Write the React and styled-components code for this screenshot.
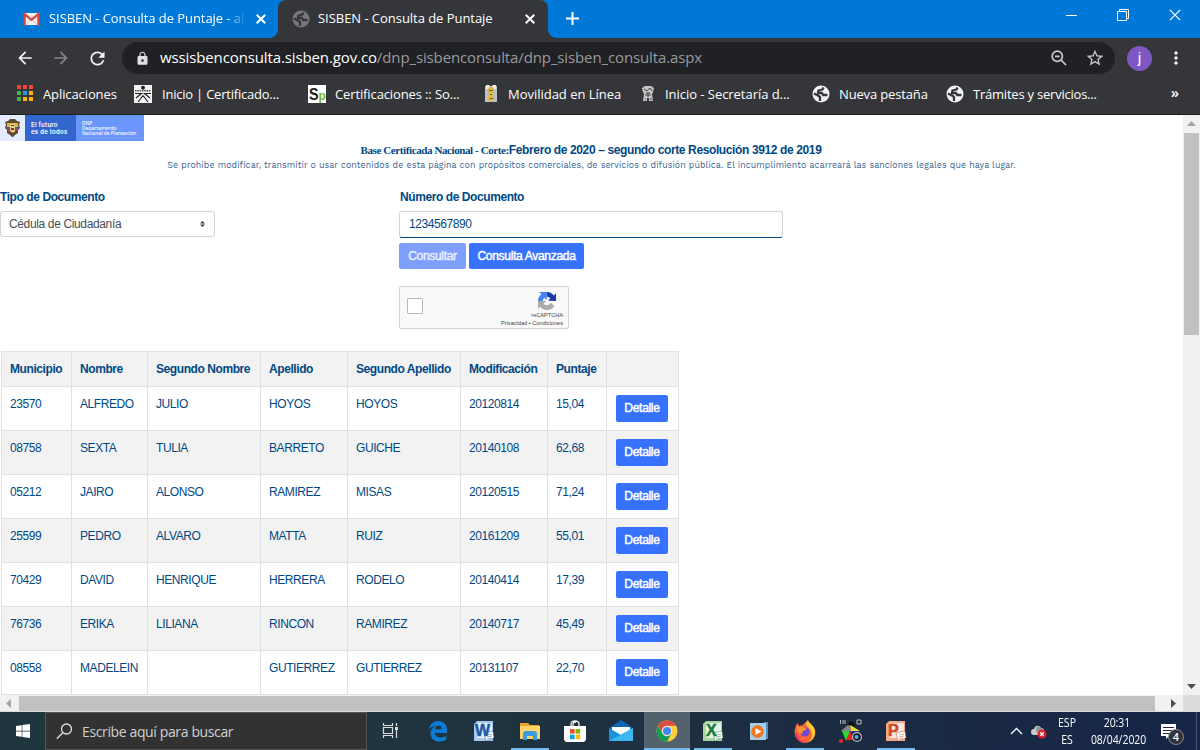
import React from 'react';
import styled, {createGlobalStyle} from 'styled-components';
import {MdArrowBack, MdArrowForward, MdRefresh, MdLock, MdStarBorder, MdMoreVert} from 'react-icons/md';
import {FaWindows} from 'react-icons/fa';

// Data
const bookmarks = [
    {icon: 'apps', text: 'Aplicaciones', left: 16, gap: 10, width: 118, spacing: -.1},
    {icon: 'sena', text: 'Inicio | Certificado...', left: 0, gap: 10, width: 174, spacing: -.22},
    {icon: 'sp', text: 'Certificaciones :: So...', left: 0, gap: 9, width: 176, spacing: -.12},
    {icon: 'movilidad', text: 'Movilidad en Línea', left: 0, gap: 10, width: 157, spacing: -.02},
    {icon: 'secretaria', text: 'Inicio - Secretaría d...', left: 0, gap: 10, width: 171, spacing: -.04},
    {icon: 'globe', text: 'Nueva pestaña', left: 0, gap: 9, width: 134, spacing: -.15},
    {icon: 'globe', text: 'Trámites y servicios...', left: 0, gap: 9, width: 170, spacing: -.22},
];
const columns = [
    {title: 'Municipio', width: 70},
    {title: 'Nombre', width: 76},
    {title: 'Segundo Nombre', width: 113},
    {title: 'Apellido', width: 87},
    {title: 'Segundo Apellido', width: 113},
    {title: 'Modificación', width: 87},
    {title: 'Puntaje', width: 59},
    {title: '', width: 72},
];
const people = [
    ['23570', 'ALFREDO', 'JULIO', 'HOYOS', 'HOYOS', '20120814', '15,04'],
    ['08758', 'SEXTA', 'TULIA', 'BARRETO', 'GUICHE', '20140108', '62,68'],
    ['05212', 'JAIRO', 'ALONSO', 'RAMIREZ', 'MISAS', '20120515', '71,24'],
    ['25599', 'PEDRO', 'ALVARO', 'MATTA', 'RUIZ', '20161209', '55,01'],
    ['70429', 'DAVID', 'HENRIQUE', 'HERRERA', 'RODELO', '20140414', '17,39'],
    ['76736', 'ERIKA', 'LILIANA', 'RINCON', 'RAMIREZ', '20140717', '45,49'],
    ['08558', 'MADELEIN', '', 'GUTIERREZ', 'GUTIERREZ', '20131107', '22,70'],
];

// Styles
const GlobalStyle = createGlobalStyle`
    * {
        box-sizing: border-box;
    }

    body {
        margin: 0;
        overflow: hidden;
    }

    svg {
        display: block;
        flex: none;
    }
`;

const Screen = styled.div`
    display: flex;
    flex-direction: column;
    width: 1200px;
    height: 750px;
    overflow: hidden;
    background: #fff;
    font-family: 'Open Sans', 'Noto Sans', sans-serif;
`;

// Browser
const TabStrip = styled.header`
    display: flex;
    flex: none;
    height: 38px;
    background: #0078d7;
    color: #fff;
`;
const Tab = styled.div`
    position: relative;
    display: flex;
    align-items: center;
    width: ${p => p.$width}px;
    padding: 0 ${p => p.$right}px 1px ${p => p.$left}px;
    border-radius: 8px 8px 0 0;
    background: ${p => p.$active ? '#35363a' : 'transparent'};

    &::before,
    &::after {
        content: '';
        position: absolute;
        bottom: 0;
        width: 8px;
        height: 8px;
        display: ${p => p.$active ? 'block' : 'none'};
    }

    &::before {
        left: -8px;
        background: radial-gradient(circle at 0 0, transparent 7.5px, #35363a 8px);
    }

    &::after {
        right: -8px;
        background: radial-gradient(circle at 100% 0, transparent 7.5px, #35363a 8px);
    }
`;
const TabTitle = styled.span`
    flex: 1;
    margin: 0 0 2px ${p => p.$gap}px;
    overflow: hidden;
    font-size: 13px;
    letter-spacing: ${p => p.$spacing}px;
    line-height: 20px;
    white-space: nowrap;
    ${p => p.$fade && 'mask-image: linear-gradient(90deg, #000 178px, transparent 197px);'}
`;
const NewTab = styled.div`
    display: flex;
    align-items: center;
    padding: 0 0 1px 18px;
`;
const WindowControls = styled.div`
    display: flex;
    gap: 40px;
    align-items: center;
    margin-left: auto;
    padding: 0 19px 8px 0;
`;
const Toolbar = styled.div`
    display: flex;
    flex: none;
    align-items: center;
    height: 40px;
    padding-left: 15px;
    background: #35363a;
    color: #f1f3f4;
`;
const NavButton = styled.span`
    width: 36px;
    color: ${p => p.$disabled ? '#85868a' : '#f1f3f4'};
`;
const Omnibox = styled.div`
    display: flex;
    align-items: center;
    width: 993px;
    height: 32px;
    margin-left: -1px;
    padding: 0 10px 0 13px;
    border-radius: 16px;
    background: #202124;
`;
const Url = styled.span`
    flex: 1;
    margin: 0 0 2px 10px;
    color: #999a9d;
    font-size: 15px;
    letter-spacing: -.12px;
    white-space: nowrap;

    > b {
        color: #fff;
        font-weight: 400;
    }
`;
const OmniActions = styled.span`
    display: flex;
    gap: 18px;
    align-items: center;
    color: #c8c9cc;
`;
const Avatar = styled.span`
    width: 25px;
    height: 25px;
    margin: 0 14px 0 12px;
    border-radius: 50%;
    background: #7e57c2;
    color: #fff;
    font-family: Roboto, sans-serif;
    font-size: 15px;
    line-height: 24px;
    text-align: center;
`;
const BookmarkBar = styled.nav`
    display: flex;
    flex: none;
    align-items: center;
    height: 37px;
    padding-bottom: 5px;
    border-bottom: 1px solid #1d1e20;
    background: #35363a;
    color: #fff;
`;
const Bookmark = styled.a`
    display: flex;
    gap: ${p => p.$gap}px;
    align-items: center;
    width: ${p => p.$width}px;
    margin-left: ${p => p.$left}px;
    font-size: 13px;
    letter-spacing: ${p => p.$spacing}px;
    white-space: nowrap;
`;
const More = styled.span`
    margin: 0 21px 3px auto;
    font-size: 15px;
    font-weight: 600;
`;

// Page
const Viewport = styled.div`
    display: grid;
    flex: none;
    grid-template-columns: 1183px 17px;
    grid-template-rows: 580px 17px;
    height: 597px;
`;
const Page = styled.main`
    overflow: hidden;
    color: #004884;
    font-family: 'Liberation Sans', Arial, sans-serif;
    font-size: 12px;
    letter-spacing: -.42px;
`;
const Banner = styled.div`
    display: flex;
    height: 26px;
    color: #fff;
    font-family: 'Noto Sans', sans-serif;
    letter-spacing: 0;
`;
const Emblem = styled.div`
    width: 25px;
    padding: 3px 0 0 4px;
    background: #e5ecfd;
`;
const Slogan = styled.div`
    width: 51px;
    padding: 7px 0 0 6px;
    background: #3366cc;
    font-family: Inter, sans-serif;
    font-size: 6.1px;
    font-weight: 600;
    letter-spacing: .22px;
    line-height: 6.8px;
    white-space: nowrap;
`;
const Agency = styled.div`
    width: 68px;
    padding: 6px 0 0 6px;
    background: #6b96fb;
    font-size: 4.9px;
    font-weight: 500;
    line-height: 5.2px;
    white-space: nowrap;
`;
const Title = styled.h1`
    margin: 2px 0 0;
    padding-right: 1px;
    font-size: 12px;
    font-weight: 700;
    letter-spacing: -.38px;
    line-height: 15px;
    text-align: center;

    > span {
        font-family: 'Liberation Serif', serif;
        font-size: 11px;
        letter-spacing: -.4px;
    }
`;
const Notice = styled.p`
    margin: 1px 0;
    color: #3a648f;
    font-family: 'Work Sans', Inter, sans-serif;
    font-size: 8.8px;
    letter-spacing: .1px;
    line-height: 13px;
    text-align: center;
    white-space: nowrap;
`;
const Form = styled.div`
    display: grid;
    grid-template-columns: 399px 384px;
    height: 161px;
    margin-top: 18px;
`;
const FieldLabel = styled.label`
    display: block;
    height: 21px;
    padding-left: ${p => p.$indent || 0}px;
    font-weight: 700;
    line-height: 14px;
`;
const Select = styled.div`
    display: flex;
    align-items: center;
    justify-content: space-between;
    width: 215px;
    height: 26px;
    padding: 0 9px 0 8px;
    border: 1px solid #ced4da;
    border-radius: 3px;
    color: #495057;
    letter-spacing: -.36px;
`;
const Field = styled.div`
    width: 384px;
    height: 27px;
    padding-left: 9px;
    border: 1px solid #ced4da;
    border-bottom: 1px solid #004884;
    border-radius: 3px;
    line-height: 25px;
`;
const Buttons = styled.div`
    display: flex;
    gap: 3px;
    margin-top: 5px;
`;
const Button = styled.button`
    display: block;
    width: ${p => p.$width}px;
    height: ${p => p.$height || 26}px;
    margin-left: ${p => p.$indent || 0}px;
    padding: 0 0 1px;
    border: 0;
    border-radius: 2px;
    background: ${p => p.disabled ? '#7f9fff' : '#3772ff'};
    color: ${p => p.disabled ? '#e9eeff' : '#fff'};
    font-family: inherit;
    font-size: 12px;
    letter-spacing: -.3px;
    -webkit-text-stroke: .45px currentColor;
`;
const Captcha = styled.div`
    display: flex;
    justify-content: space-between;
    width: 170px;
    height: 43px;
    margin-top: 17px;
    padding: 11px 5px 0 7px;
    border: 1px solid #d3d3d3;
    border-radius: 2px;
    background: #f9f9f9;
`;
const CheckBox = styled.span`
    width: 16px;
    height: 16px;
    border: 1px solid #b9b9b9;
    border-radius: 1px;
    background: #fff;
`;
const CaptchaBrand = styled.div`
    display: flex;
    flex-direction: column;
    align-items: flex-end;
    margin-top: -6px;
    color: #444;
    font-size: 5.6px;
    letter-spacing: 0;
    line-height: 7.5px;

    > svg {
        margin: 0 7px 2px 0;
    }
`;
const Table = styled.table`
    width: 677px;
    margin-left: 1px;
    border-collapse: collapse;
    table-layout: fixed;
    line-height: 18px;

    th,
    td {
        padding: 8px 8px 0;
        border: 1px solid #dee2e6;
        text-align: left;
        vertical-align: top;
        white-space: nowrap;
    }
`;
const HeadRow = styled.tr`
    height: 35px;
    background: #f2f2f2;
`;
const Row = styled.tr`
    height: 44px;
    background: ${p => p.$striped ? '#f2f2f2' : '#fff'};
`;

// Scrollbars
const VerticalBar = styled.div`
    display: flex;
    flex-direction: column;
    align-items: center;
    justify-content: space-between;
    background: #f1f1f1;
`;
const VerticalThumb = styled.div`
    width: 15px;
    height: 202px;
    margin: 1px 0 auto;
    background: #c1c1c1;
`;
const HorizontalBar = styled.div`
    display: flex;
    align-items: center;
    border-bottom: 1px solid #dadada;
    background: #f1f1f1;
`;
const HorizontalThumb = styled.div`
    flex: none;
    width: 1136px;
    height: 15px;
    margin: 0 10px 0 2px;
    background: #c1c1c1;
`;
const Corner = styled.div`
    background: #dcdcdc;
`;

// Taskbar
const Taskbar = styled.footer`
    display: flex;
    flex: none;
    height: 38px;
    background: linear-gradient(90deg, #1f363f 0%, #20343f 35%, #1c2d42 65%, #162547 100%);
    color: #fff;
`;
const Start = styled.div`
    width: 45px;
    padding: 11px 0 0 15px;
`;
const Search = styled.div`
    display: flex;
    gap: 9px;
    align-items: center;
    width: 322px;
    padding-left: 10px;
    border: 1px solid #535556;
    background: #323232;
    color: #d0d0d0;
    font-size: 14px;
    letter-spacing: -.37px;
`;
const TaskView = styled.div`
    width: 48px;
    padding: 10px 0 0 15px;
`;
const Task = styled.div`
    position: relative;
    display: flex;
    align-items: center;
    justify-content: center;
    width: 45.85px;
    background: ${p => p.$active ? '#53626c' : 'transparent'};

    &::after {
        content: '';
        position: absolute;
        right: ${p => p.$active ? 0 : 4}px;
        bottom: 0;
        left: ${p => p.$active ? 0 : 4}px;
        height: 2px;
        background: ${p => p.$active || p.$open ? '#76b9ed' : 'transparent'};
    }
`;
const Tray = styled.div`
    display: flex;
    align-items: center;
    margin-left: auto;
    padding-right: 3px;
`;
const TrayText = styled.div`
    width: ${p => p.$width}px;
    font-size: 12px;
    line-height: 17px;
    text-align: center;
    transform: scaleX(${p => p.$narrow || 1});
    white-space: nowrap;
`;
const Notifications = styled.div`
    position: relative;
    width: 50px;
    height: 38px;
    padding: 11px 0 0 14px;
    border-right: 1px solid #4a5670;
`;
const Count = styled.span`
    position: absolute;
    top: 17px;
    left: 21px;
    width: 16px;
    height: 16px;
    border: 1px solid #85888d;
    border-radius: 50%;
    background: #313337;
    font-size: 11px;
    font-weight: 600;
    line-height: 14px;
    text-align: center;
`;

// Icons
const Cross = ({size = 10, width = 2}) => (
    <svg width={size} height={size} viewBox='0 0 10 10' stroke='#fff' strokeWidth={width}>
        <path d='M.7.7l8.6 8.6M9.3.7L.7 9.3' />
    </svg>
);

const Globe = ({color = '#f1f3f4'}) => (
    <svg width='18' height='18' viewBox='0 0 18 18'>
        <circle cx='9' cy='9' r='8.5' fill={color} />
        <path fill='none' stroke='#35363a' strokeWidth='2.3' strokeLinejoin='round' d='M11.5 2.500L10.500 4.500 6.500 5.500 6 8h4l1 2h4.500M2 8.500l4 2 2 1.500v4' />
    </svg>
);

const Arrow = ({turn, color = '#505050'}) => (
    <svg width='17' height='17' viewBox='0 0 17 17' fill={color}>
        <path d='M4 11l4.500-5 4.500 5z' transform={`rotate(${turn} 8.5 8.5)`} />
    </svg>
);

const bookmarkIcons = {
    apps: (
        <svg width='17' height='17' viewBox='0 0 17 17'>
            {['#f44336', '#f44336', '#f44336', '#4caf50', '#2196f3', '#ffb300', '#4caf50', '#ffb300', '#ffb300'].map((fill, i) => (
                <rect key={i} x={1 + i % 3 * 6} y={Math.floor(i / 3) * 6} width='4' height='4' fill={fill} />
            ))}
        </svg>
    ),
    sena: (
        <svg width='18' height='18' viewBox='0 0 18 18'>
            <path fill='#f4f4f4' d='M0 0h18v18H0z' />
            <circle cx='9' cy='2.8' r='2' fill='#222' />
            <path stroke='#444' strokeWidth='1.500' strokeDasharray='1.500 .8' d='M1 5.800h16' />
            <path stroke='#222' strokeWidth='1.200' fill='none' d='M1 8.500h6.500L2 13M17 8.500h-6.500l5.500 4.500M9 10.500L4 17M9 10.500l5 6.500' />
        </svg>
    ),
    sp: (
        <svg width='18' height='18' viewBox='0 0 18 18'>
            <path fill='#fff' d='M0 0h18v18H0z' />
            <text x='1' y='15' fontFamily='Liberation Sans' fontWeight='700' fontSize='17' textLength='9.500' lengthAdjust='spacingAndGlyphs' fill='#222'>S</text>
            <text x='10.500' y='15' fontFamily='Liberation Sans' fontWeight='700' fontSize='12' fill='#71b331'>p</text>
        </svg>
    ),
    movilidad: (
        <svg width='14' height='18' viewBox='0 0 14 18'>
            <path fill='#b8c4c9' d='M1 1h12v16H1z' />
            <path fill='#eee' d='M2 0h3l2 2 2-2h3v4H2z' />
            <path fill='#e0b64a' d='M4 3l3-2 3 2v4l-1 2 1 2v4l-3 2-3-2v-4l1-2-1-2z' />
            <path fill='#775d29' d='M5 5h4v1H5zM6 9h2v1H6zM6 13h3v1H6z' />
        </svg>
    ),
    secretaria: (
        <svg width='14' height='18' viewBox='0 0 14 18'>
            <path fill='#c4c4c4' d='M1 3l3-2h6l3 2-1 4-1 2 1 7H8v-3H6v3H2l1-7-1-2z' />
            <path stroke='#444' fill='none' d='M3 4l3 2 3-3 2 3M5 8h4M4 10h6M7 8v4M4 14h1M9 14h2' />
        </svg>
    ),
    globe: <Globe />,
};

const Shield = () => (
    <svg width='17' height='20' viewBox='0 0 17 20'>
        <path fill='#5b4a32' d='M1 4l3-1 2-2h5l2 2 3 1-1 3 1 3-2 2v3l-3 2-2 2H8l-2-2-3-2v-3l-2-2 1-3z' />
        <path fill='#e4b63c' d='M3 5h11v4H3z' />
        <path fill='#3d64a8' d='M3 9h11v2H3z' />
        <path fill='#be3b31' d='M3 11h11l-2 3H5z' />
        <path fill='#e3ca8e' d='M6 6h5v7l-2 2-3-2z' />
        <path fill='#773324' d='M7 7h3v1H7zM7 10h3v2H7z' />
    </svg>
);

const CaptchaLogo = () => (
    <svg width='18' height='18' viewBox='0 0 64 64'>
        <path fill='#1c3aa9' d='M64 32V4l-8 8C50 4 41 0 32 0v17c5 0 9 2 12 6l-8 8z' />
        <path fill='#4285f4' d='M32 0H4l8 8C4 14 0 23 0 32h17c0-5 2-9 6-12l8 8z' />
        <path fill='#ababab' d='M0 32v28l8-8c6 8 15 12 24 12 11 0 20-5 26-14L45 38c-2 5-7 9-13 9-5 0-9-2-12-6l9-9z' />
    </svg>
);

const Office = ({letter, color, light, x}) => (
    <svg width='22' height='22' viewBox='0 0 22 22'>
        <path fill={light} d='M1 4l3-3h16v20H1z' />
        <path fill='#fff' d='M4 3h15v15H4z' opacity='.7' />
        <path fill='#fff' stroke={color} strokeWidth='.5' d='M11 13l9-2 1 7-8 3z' />
        <path stroke={color} strokeWidth='.8' opacity='.6' d='M14 15l5-1M14 17l5-1M14 19l4-1' />
        <text x={x} y='15.500' fontFamily='Liberation Sans' fontWeight='700' fontSize='16' fill={color} stroke={color} strokeWidth='.5'>{letter}</text>
    </svg>
);

const taskIcons = {
    edge: (
        <svg width='20' height='22' viewBox='0 0 20 22'>
            <path fill='#0b7bd8' d='M1 9C2 4 5.500 1 10 1c6 0 9 4 9 9v3H7c.3 3 2.500 4.500 5.500 4.500 2.300 0 4-.6 5.700-1.700v4C16.500 21 14 21.500 11.500 21.500 6 21.500 2.500 18 2.500 13.200c0-3.300 1.900-6 5-7.300C5 6 2.500 7 1 9zm6.200.3h6.600c0-2.400-1-3.800-3.100-3.800-2 0-3.200 1.500-3.500 3.800z' />
        </svg>
    ),
    word: <Office letter='W' x='2' color='#2058a8' light='#a9c8f0' />,
    explorer: (
        <svg width='22' height='20' viewBox='0 0 22 20'>
            <path fill='#e8a92a' d='M1 2h8l2 2h9v4H1z' />
            <path fill='#fbd46b' d='M1 5h20v13H1z' />
            <path fill='#3c9ae0' d='M4 12l2-2h10l2 2v7h-4v-4H8v4H4z' />
        </svg>
    ),
    store: (
        <svg width='22' height='23' viewBox='0 0 22 23'>
            <path fill='none' stroke='#eee' strokeWidth='1.300' d='M7 7V4q0-3 4-3t4 3v3M9 6V4q0-2 3-2' />
            <path fill='#fff' d='M0 6h22v14l-2 2H2l-2-2z' />
            <path fill='#f25022' d='M6 9h4.600v4.600H6z' />
            <path fill='#7fba00' d='M11.600 9h4.600v4.600h-4.600z' />
            <path fill='#00a4ef' d='M6 14.600h4.600v4.600H6z' />
            <path fill='#ffb900' d='M11.600 14.600h4.600v4.600h-4.600z' />
        </svg>
    ),
    mail: (
        <svg width='24' height='22' viewBox='0 0 24 22'>
            <path fill='#0868b4' d='M0 8l12-8 12 8v4H0z' />
            <path fill='#fff' d='M3 7h18v8H3z' />
            <path fill='#1b91dd' d='M0 8l12 7L24 8v13H0z' />
            <path fill='#3bb8f0' d='M0 21L24 8v13z' />
        </svg>
    ),
    chrome: (
        <svg width='22' height='22' viewBox='0 0 48 48'>
            <circle cx='24' cy='24' r='23' fill='#ffcd40' />
            <path fill='#dc4e41' d='M4 12.500A23 23 0 0 1 44 12.500H24A11.500 11.500 0 0 0 14 30z' />
            <path fill='#109d58' d='M4 12.500A23 23 0 0 0 24 47l10-17.300A11.500 11.500 0 0 1 14 29.700z' />
            <circle cx='24' cy='24' r='11' fill='#f1f1f1' />
            <circle cx='24' cy='24' r='8.800' fill='#4587f3' />
        </svg>
    ),
    excel: <Office letter='X' x='4' color='#1d7b3c' light='#a6d7a3' />,
    media: (
        <svg width='20' height='20' viewBox='0 0 20 20'>
            <path fill='#4b91bd' d='M15 1h4v17h-4z' />
            <path fill='#a7cee7' d='M1 2h14v17H1zM15 2h2v17h-2z' />
            <circle cx='8.500' cy='10.500' r='6.300' fill='#f07721' />
            <path fill='#fff' d='M6.500 7l6 3.500-6 3.500z' />
        </svg>
    ),
    firefox: (
        <svg width='22' height='23' viewBox='0 0 22 23'>
            <path fill='#ff6538' d='M2 5l2-2 1 3 4-1c1-2 3-3 5-5 0 3 5 5 7 10 2 7-4 13-10 13S-1 17 1 9z' />
            <path fill='#ffca32' d='M14 0c0 3 7 5 7 12 0 6-4 9-7 10 4-3 5-7 3-11-1-3-4-4-5-7z' />
            <path fill='#e9366b' d='M1 12c0 7 5 11 10 11-4-2-6-4-7-8z' />
            <circle cx='11' cy='12' r='4.600' fill='#7149cf' />
            <path fill='#ff922f' d='M3 6l6 1 4 2-4 2-1 3-5-3z' />
        </svg>
    ),
    pentagon: (
        <svg width='24' height='24' viewBox='0 0 24 24'>
            <path fill='none' stroke='#bbb' d='M1.500 1v4M4 1v4M6 1v4M18 1v4h4V1z' />
            <path fill='#888' d='M2 12l8-7 2 7-4 2z' />
            <path fill='#111' d='M8 6l4-4 6 5z' />
            <path fill='#f0e52c' d='M11 6l10 6-9 1z' />
            <path fill='#1fe02c' d='M3 12l8 1-4 9z' />
            <path fill='#e22' d='M11 12l4 9H7z' />
            <circle cx='2' cy='22' r='2' fill='#e22' />
            <path fill='#22a' d='M12 12h8l-4 6z' />
            <circle cx='18' cy='18' r='5' fill='#bbb' />
            <circle cx='18' cy='18' r='3.800' fill='#113' />
            <circle cx='17.500' cy='18' r='2' fill='#49b9c8' />
        </svg>
    ),
    powerpoint: <Office letter='P' x='3' color='#cc4b20' light='#f3a98c' />,
};
const tasks = [
    {icon: 'edge'},
    {icon: 'word'},
    {icon: 'explorer', open: true},
    {icon: 'store'},
    {icon: 'mail'},
    {icon: 'chrome', active: true},
    {icon: 'excel', open: true},
    {icon: 'media'},
    {icon: 'firefox', open: true},
    {icon: 'pentagon'},
    {icon: 'powerpoint', open: true},
];

const Browser = () => (
    <>
        <TabStrip>
            <Tab $width={278} $left={23} $right={12}>
                <svg width='17' height='14' viewBox='0 0 17 14'>
                    <path fill='#f2f2f2' d='M1 1h15v12H1z' />
                    <path fill='none' stroke='#ccc' d='M3 13l4-5M14 13l-4-5' />
                    <path fill='none' stroke='#dc4638' strokeWidth='2.400' d='M1.500 14V2l7 5.800L15.500 2v12' />
                </svg>
                <TabTitle $gap={9} $spacing={-.06} $fade>SISBEN - Consulta de Puntaje - al</TabTitle>
                <Cross />
            </Tab>
            <Tab $active $width={270} $left={14} $right={13}>
                <Globe color='#77787b' />
                <TabTitle $gap={8} $spacing={-.04}>SISBEN - Consulta de Puntaje</TabTitle>
                <Cross />
            </Tab>
            <NewTab>
                <svg width='13' height='13' viewBox='0 0 13 13' stroke='#fff' strokeWidth='2'>
                    <path d='M6.500 0v13M0 6.500h13' />
                </svg>
            </NewTab>
            <WindowControls>
                <svg width='12' height='12' viewBox='0 0 12 12' stroke='#fff'>
                    <path d='M1 6.500h11' />
                </svg>
                <svg width='12' height='12' viewBox='0 0 12 12' stroke='#fff' fill='none'>
                    <path d='M.5 2.500h9v9h-9zM2.500 2.500v-2h9v9h-2' />
                </svg>
                <Cross size={12} width={1} />
            </WindowControls>
        </TabStrip>
        <Toolbar>
            <NavButton><MdArrowBack size={20} /></NavButton>
            <NavButton $disabled><MdArrowForward size={20} /></NavButton>
            <NavButton><MdRefresh size={21} /></NavButton>
            <Omnibox>
                <MdLock size={15} color='#e0e0e0' />
                <Url><b>wssisbenconsulta.sisben.gov.co</b>/dnp_sisbenconsulta/dnp_sisben_consulta.aspx</Url>
                <OmniActions>
                    <svg width='16' height='16' viewBox='0 0 16 16' fill='none' stroke='currentColor' strokeWidth='1.700'>
                        <circle cx='6.300' cy='6.300' r='5.100' />
                        <path d='M10 10l5 5M4 6.300h4.600' />
                    </svg>
                    <MdStarBorder size={20} />
                </OmniActions>
            </Omnibox>
            <Avatar>j</Avatar>
            <MdMoreVert size={20} />
        </Toolbar>
        <BookmarkBar>
            {bookmarks.map(({icon, text, left, gap, width, spacing}) => (
                <Bookmark key={text} $left={left} $gap={gap} $width={width} $spacing={spacing}>
                    {bookmarkIcons[icon]}
                    {text}
                </Bookmark>
            ))}
            <More>»</More>
        </BookmarkBar>
    </>
);

const Query = () => (
    <Form>
        <div>
            <FieldLabel>Tipo de Documento</FieldLabel>
            <Select>
                Cédula de Ciudadanía
                <svg width='5' height='6' viewBox='0 0 5 6' fill='#343a40'>
                    <path d='M0 2.600L2.500 0 5 2.600zM0 3.400L2.500 6 5 3.400z' />
                </svg>
            </Select>
        </div>
        <div>
            <FieldLabel $indent={1}>Número de Documento</FieldLabel>
            <Field>1234567890</Field>
            <Buttons>
                <Button $width={67} disabled>Consultar</Button>
                <Button $width={115}>Consulta Avanzada</Button>
            </Buttons>
            <Captcha>
                <CheckBox />
                <CaptchaBrand>
                    <CaptchaLogo />
                    <span>reCAPTCHA</span>
                    <span>Privacidad • Condiciones</span>
                </CaptchaBrand>
            </Captcha>
        </div>
    </Form>
);

const Results = () => (
    <Table>
        <colgroup>
            {columns.map(({title, width}) => <col key={title} width={width} />)}
        </colgroup>
        <thead>
            <HeadRow>
                {columns.map(({title}) => <th key={title}>{title}</th>)}
            </HeadRow>
        </thead>
        <tbody>
            {people.map((person, i) => (
                <Row key={person[0]} $striped={i % 2 === 1}>
                    {person.map((value, j) => <td key={j}>{value}</td>)}
                    <td><Button $indent={1} $width={52} $height={27}>Detalle</Button></td>
                </Row>
            ))}
        </tbody>
    </Table>
);

const App = () => (
    <Screen>
        <GlobalStyle />
        <Browser />
        <Viewport>
            <Page>
                <Banner>
                    <Emblem><Shield /></Emblem>
                    <Slogan>El futuro<br />es de todos</Slogan>
                    <Agency>DNP<br />Departamento<br />Nacional de Planeación</Agency>
                </Banner>
                <Title><span>Base Certificada Nacional - Corte:</span>Febrero de 2020 – segundo corte Resolución 3912 de 2019</Title>
                <Notice>Se prohibe modificar, transmitir o usar contenidos de esta página con propósitos comerciales, de servicios o difusión pública. El incumplimiento acarreará las sanciones legales que haya lugar.</Notice>
                <Query />
                <Results />
            </Page>
            <VerticalBar>
                <Arrow turn={0} color='#a3a3a3' />
                <VerticalThumb />
                <Arrow turn={180} />
            </VerticalBar>
            <HorizontalBar>
                <Arrow turn={-90} color='#a3a3a3' />
                <HorizontalThumb />
                <Arrow turn={90} />
            </HorizontalBar>
            <Corner />
        </Viewport>
        <Taskbar>
            <Start><FaWindows size={16} /></Start>
            <Search>
                <svg width='17' height='17' viewBox='0 0 17 17' fill='none' stroke='#e0e0e0' strokeWidth='1.300'>
                    <circle cx='10.500' cy='6' r='5' />
                    <path d='M7 9.500L.8 15.700' />
                </svg>
                Escribe aquí para buscar
            </Search>
            <TaskView>
                <svg width='17' height='17' viewBox='0 0 17 17' fill='none' stroke='#ddd' strokeWidth='1.200'>
                    <path d='M1.500 1v2.500h9V1M1.500 5.500h9v6h-9zM1.500 16v-2.500h9V16M14.500 1v3M14.500 8v8' />
                    <path fill='#ddd' stroke='none' d='M13 5h3v3h-3z' />
                </svg>
            </TaskView>
            {tasks.map(({icon, active, open}) => (
                <Task key={icon} $active={active} $open={open}>{taskIcons[icon]}</Task>
            ))}
            <Tray>
                <svg width='13' height='8' viewBox='0 0 13 8' fill='none' stroke='#fff' strokeWidth='1.300'>
                    <path d='M1 7l5.500-5.500L12 7' />
                </svg>
                <svg width='16' height='14' viewBox='0 0 16 14' style={{margin: '2px 0 0 8px'}}>
                    <path fill='#c9ccd0' d='M3 10a3 3 0 0 1 0-6c1-4 6-4 7-1 3 0 4 3 3 5v2z' />
                    <path fill='#8d9297' d='M5 3c2-3 6-1 6 2-3 0-5 1-6 3z' />
                    <circle cx='11' cy='9' r='4.500' fill='#e01e2b' />
                    <path stroke='#fff' strokeWidth='1.300' d='M9.300 7.300l3.400 3.400M12.700 7.300l-3.400 3.400' />
                </svg>
                <TrayText $width={40} $narrow={.88}>ESP<br />ES</TrayText>
                <TrayText $width={60} $narrow={.87}>20:31<br />08/04/2020</TrayText>
                <Notifications>
                    <svg width='17' height='17' viewBox='0 0 17 17'>
                        <path fill='#fff' d='M0 1h15v12H8l-3 3v-3H0z' />
                        <path stroke='#1a2747' d='M2 4.500h11M2 7.500h11M2 10.500h7' />
                    </svg>
                    <Count>4</Count>
                </Notifications>
            </Tray>
        </Taskbar>
    </Screen>
);

export default App;
